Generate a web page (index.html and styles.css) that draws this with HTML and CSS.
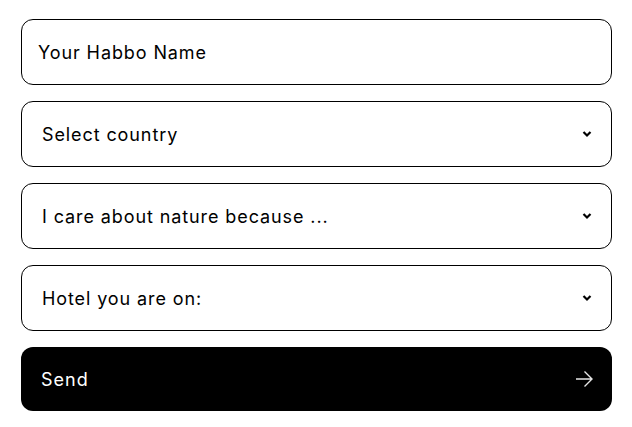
FILE: index.html
```html
<!DOCTYPE html>
<html>
<head>
<meta charset="utf-8">
<link rel="stylesheet" href="styles.css">
</head>
<body>
<form class="form">
  <div class="field field-input">
    <span class="placeholder">Your Habbo Name</span>
  </div>
  <div class="field field-select">
    <span class="label">Select country</span>
    <svg class="chevron" width="10" height="8" viewBox="0 0 10 8"><path d="M1.5 2 L5 5.5 L8.5 2" fill="none" stroke="#000" stroke-width="2.2"/></svg>
  </div>
  <div class="field field-select">
    <span class="label">I care about nature because ...</span>
    <svg class="chevron" width="10" height="8" viewBox="0 0 10 8"><path d="M1.5 2 L5 5.5 L8.5 2" fill="none" stroke="#000" stroke-width="2.2"/></svg>
  </div>
  <div class="field field-select">
    <span class="label">Hotel you are on:</span>
    <svg class="chevron" width="10" height="8" viewBox="0 0 10 8"><path d="M1.5 2 L5 5.5 L8.5 2" fill="none" stroke="#000" stroke-width="2.2"/></svg>
  </div>
  <button type="button" class="send">
    <span>Send</span>
    <svg class="arrow" width="18" height="18" viewBox="0 0 18 18"><path d="M1 9 H17 M9.5 1.5 L17 9 L9.5 16.5" fill="none" stroke="#e6e6e6" stroke-width="1.4"/></svg>
  </button>
</form>
</body>
</html>
```
FILE: styles.css
```css
* { box-sizing: border-box; }
html, body { margin: 0; background: #fff; }
body {
  font-family: "Inter", "Liberation Sans", sans-serif;
  color: #000;
}
.form {
  display: flex;
  flex-direction: column;
  gap: 16px;
  padding: 19px 20px 0 21px;
}
.field {
  height: 66px;
  border: 1px solid #000;
  border-radius: 12px;
  display: flex;
  align-items: center;
  font-size: 18px;
  letter-spacing: 0.9px;
}
.field-input { padding-left: 16px; }
.field-select {
  padding-left: 20px;
  padding-right: 19px;
  justify-content: space-between;
}
.chevron { display: block; }
.send {
  height: 64px;
  border: none;
  border-radius: 12px;
  background: #000;
  color: #fff;
  font-family: inherit;
  font-size: 18px;
  letter-spacing: 1px;
  display: flex;
  align-items: center;
  justify-content: space-between;
  padding: 0 19px 0 20px;
}
.arrow { display: block; }
```
